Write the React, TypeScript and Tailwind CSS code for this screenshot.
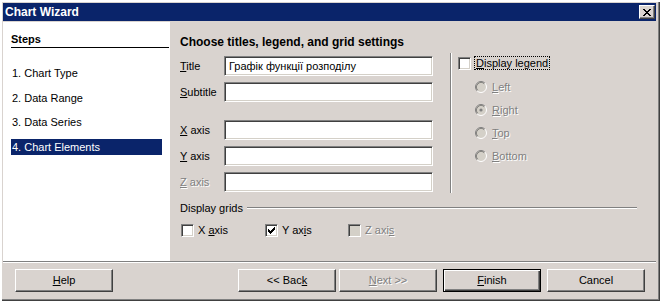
import React from "react";

const dis = "text-[#808080] [text-shadow:1px_1px_0_#fff]";

function Sunken({ className = "", children }: { className?: string; children?: React.ReactNode }) {
  return (
    <div
      className={`box-border border border-t-[#808080] border-l-[#808080] border-r-white border-b-white shadow-[inset_1px_1px_0_#404040,inset_-1px_-1px_0_#d4d0c8] ${className}`}
    >
      {children}
    </div>
  );
}

function Check() {
  const rows: [number, number, number][] = [
    [0, 6, 1],
    [1, 5, 2],
    [2, 0, 1],
    [2, 4, 3],
    [3, 0, 2],
    [3, 3, 3],
    [4, 0, 5],
    [5, 1, 3],
    [6, 2, 1],
  ];
  return (
    <svg width="7" height="7" viewBox="0 0 7 7" shapeRendering="crispEdges">
      {rows.map(([y, x, w], i) => (
        <rect key={i} x={x} y={y} width={w} height={1} fill="#000" />
      ))}
    </svg>
  );
}

function CheckBox({ checked = false, disabled = false }: { checked?: boolean; disabled?: boolean }) {
  return (
    <Sunken className={`w-[13px] h-[13px] flex items-center justify-center shrink-0 ${disabled ? "bg-[#d4d0c8]" : "bg-white"}`}>
      {checked && <Check />}
    </Sunken>
  );
}

function Radio({ selected = false }: { selected?: boolean }) {
  return (
    <svg width="12" height="12" viewBox="0 0 12 12" className="shrink-0">
      <circle cx="6" cy="6" r="5" fill="#d4d0c8" />
      <path d="M2.11 9.89 A5.5 5.5 0 0 1 9.89 2.11" stroke="#808080" fill="none" />
      <path d="M9.89 2.11 A5.5 5.5 0 0 1 2.11 9.89" stroke="#ffffff" fill="none" />
      <path d="M2.82 9.18 A4.5 4.5 0 0 1 9.18 2.82" stroke="#404040" fill="none" strokeOpacity="0.5" />
      {selected && <circle cx="6" cy="6" r="1.6" fill="#808080" />}
    </svg>
  );
}

function CloseGlyph() {
  const rows: [number, number, number][] = [
    [0, 0, 2],
    [0, 6, 2],
    [1, 1, 2],
    [1, 5, 2],
    [2, 2, 4],
    [3, 3, 2],
    [4, 2, 4],
    [5, 1, 2],
    [5, 5, 2],
    [6, 0, 2],
    [6, 6, 2],
  ];
  return (
    <svg width="8" height="7" viewBox="0 0 8 7" shapeRendering="crispEdges">
      {rows.map(([y, x, w], i) => (
        <rect key={i} x={x} y={y} width={w} height={1} fill="#000" />
      ))}
    </svg>
  );
}

function Button({ children, className = "", def = false }: { children: React.ReactNode; className?: string; def?: boolean }) {
  if (def) {
    return (
      <div
        className={`box-border w-[98px] h-[23px] border border-black shadow-[inset_1px_1px_0_#fff,inset_-1px_-1px_0_#404040,inset_-2px_-2px_0_#808080] flex items-center justify-center ${className}`}
      >
        {children}
      </div>
    );
  }
  return (
    <div
      className={`box-border w-[98px] h-[23px] border border-t-white border-l-white border-r-[#404040] border-b-[#404040] shadow-[inset_-1px_-1px_0_#808080] flex items-center justify-center ${className}`}
    >
      {children}
    </div>
  );
}

function Row({ label, labelDisabled = false, value = "", className = "" }: { label: React.ReactNode; labelDisabled?: boolean; value?: string; className?: string }) {
  return (
    <div className={`flex items-center h-[20px] ${className}`}>
      <div className={`w-[44px] ${labelDisabled ? dis : ""}`}>{label}</div>
      <Sunken className="w-[209px] h-[20px] bg-white pl-[4px] leading-[18px] whitespace-nowrap">{value}</Sunken>
    </div>
  );
}

export default function App() {
  return (
    <div className="box-border w-[660px] h-[301px] bg-[#d9d3cf] font-['Liberation_Sans',Arial,sans-serif] text-[11px] text-black flex flex-col pt-[3px] pl-[3px] pr-[4px] pb-[3px] shadow-[inset_2px_2px_0_#fff,inset_-1px_-1px_0_#404040,inset_-2px_-2px_0_#808080] overflow-hidden">
      {/* Title bar */}
      <div className="h-[18px] bg-[#0a246a] flex items-center justify-between pl-[2px] pr-[1px] shrink-0">
        <span className="text-white font-bold text-[12px] leading-[18px]">Chart Wizard</span>
        <div className="box-border w-[16px] h-[14px] bg-[#d9d3cf] border border-t-white border-l-white border-r-[#404040] border-b-[#404040] shadow-[inset_-1px_-1px_0_#808080] flex items-center justify-center">
          <CloseGlyph />
        </div>
      </div>

      {/* Body */}
      <div className="mt-[1px] h-[239px] flex shrink-0">
        {/* Steps panel */}
        <div className="w-[167px] bg-white pl-[8px] pr-[1px] pt-[10px] flex flex-col">
          <div className="h-[16px] border-b border-black font-bold leading-[15px]">Steps</div>
          <div className="mt-[17px] h-[16px] leading-[16px] pl-[1px] w-[151px]">1. Chart Type</div>
          <div className="mt-[9px] h-[16px] leading-[16px] pl-[1px] w-[151px]">2. Data Range</div>
          <div className="mt-[8px] h-[16px] leading-[16px] pl-[1px] w-[151px]">3. Data Series</div>
          <div className="mt-[9px] h-[16px] leading-[16px] pl-[1px] w-[151px] bg-[#0a246a] text-white">4. Chart Elements</div>
        </div>

        {/* Content */}
        <div className="flex-1 pl-[10px] pt-[13px] flex flex-col">
          <div className="h-[14px] leading-[14px] font-bold text-[12px]">Choose titles, legend, and grid settings</div>
          <div className="mt-[4px] h-[140px] flex">
            <div className="w-[270px] pt-[3px] flex flex-col">
              <Row label={<><u>T</u>itle</>} value="Графік функції розподілу" />
              <Row className="mt-[6px]" label={<><u>S</u>ubtitle</>} />
              <Row className="mt-[18px]" label={<><u>X</u> axis</>} />
              <Row className="mt-[6px]" label={<><u>Y</u> axis</>} />
              <Row className="mt-[6px]" label={<><u>Z</u> axis</>} labelDisabled />
            </div>
            <div className="box-border w-[2px] border-l border-r border-l-[#808080] border-r-white" />
            <div className="pl-[6px] pt-[3px] flex flex-col">
              <div className="flex items-center h-[14px]">
                <CheckBox />
                <span className="ml-[3px] h-[14px] leading-[12px] px-[1px] border border-dotted border-black">
                  <u>D</u>isplay legend
                </span>
              </div>
              {[
                ["L", "eft", false, "mt-[9px]"],
                ["R", "ight", true, "mt-[7px]"],
                ["T", "op", false, "mt-[7px]"],
                ["B", "ottom", false, "mt-[7px]"],
              ].map(([a, b, sel, mt]) => (
                <div key={a as string} className={`flex items-center h-[16px] ml-[17px] ${mt}`}>
                  <Radio selected={sel as boolean} />
                  <span className={`ml-[5px] ${dis}`}>
                    <u>{a as string}</u>
                    {b as string}
                  </span>
                </div>
              ))}
            </div>
          </div>

          {/* Display grids */}
          <div className="mt-[8px] h-[14px] flex items-center pr-[19px]">
            <span>Display grids</span>
            <div className="ml-[4px] flex-1 box-border h-[2px] border-t border-b border-t-[#808080] border-b-white" />
          </div>
          <div className="mt-[9px] h-[13px] flex items-center pl-[1px]">
            <div className="w-[84px] flex items-center">
              <CheckBox />
              <span className="ml-[4px]">
                X <u>a</u>xis
              </span>
            </div>
            <div className="w-[83px] flex items-center">
              <CheckBox checked />
              <span className="ml-[4px]">
                Y ax<u>i</u>s
              </span>
            </div>
            <div className="flex items-center">
              <CheckBox disabled />
              <span className={`ml-[4px] ${dis}`}>
                Z axi<u>s</u>
              </span>
            </div>
          </div>
        </div>
      </div>

      {/* Separator */}
      <div className="box-border h-[2px] border-t border-b border-t-[#808080] border-b-white shrink-0" />

      {/* Buttons */}
      <div className="h-[35px] pt-[6px] pl-[12px] flex shrink-0">
        <Button>
          <span>
            <u>H</u>elp
          </span>
        </Button>
        <Button className="ml-[125px]">
          <span>
            &lt;&lt; Bac<u>k</u>
          </span>
        </Button>
        <Button className="ml-[3px]">
          <span className={dis}>
            <u>N</u>ext &gt;&gt;
          </span>
        </Button>
        <Button className="ml-[6px]" def>
          <span>
            <u>F</u>inish
          </span>
        </Button>
        <Button className="ml-[6px]">
          <span>Cancel</span>
        </Button>
      </div>
    </div>
  );
}
